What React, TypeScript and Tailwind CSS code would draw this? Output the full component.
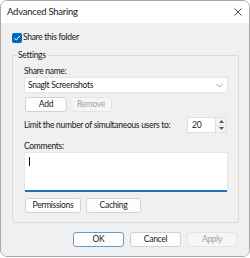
import React from "react";

function Btn({ children, w, disabled, primary }: { children: React.ReactNode; w: string; disabled?: boolean; primary?: boolean }) {
  return (
    <div
      className={
        "flex h-[15px] items-center justify-center rounded-[3px] border " +
        w +
        " " +
        (disabled
          ? "border-[#e4e4e4] bg-[#f5f5f5] text-[#a3a3a3]"
          : primary
          ? "border-[#6a9ad0] bg-[#fdfdfd] text-[#1a1a1a]"
          : "border-[#d2d2d2] bg-[#fdfdfd] text-[#1a1a1a]")
      }
    >
      {children}
    </div>
  );
}

export default function App() {
  return (
    <div className="h-[258px] w-[250px] bg-white" style={{ fontFamily: 'Lato, "Noto Sans", sans-serif' }}>
      <div className="flex h-[257px] w-[250px] flex-col overflow-hidden rounded-[7px] border border-[#a8a8a8]">
        <div className="flex h-[22px] shrink-0 items-center justify-between bg-white pl-[6px] pr-[7px] text-[9.5px] tracking-[-0.25px] text-[#1a1a1a]">
          <span>Advanced Sharing</span>
          <svg width="8" height="8" viewBox="0 0 8 8">
            <path d="M0.5 0.5 L7.5 7.5 M7.5 0.5 L0.5 7.5" stroke="#333" strokeWidth="0.9" />
          </svg>
        </div>
        <div className="flex flex-1 flex-col whitespace-nowrap bg-[#f0f0f0] px-[11px] text-[8.5px] leading-[11px] tracking-[-0.3px] text-[#161616]">
          <div className="mt-[9px] flex h-[11px] items-center gap-[1px]">
            <div className="flex h-[10px] w-[10px] items-center justify-center rounded-[2px] bg-[#0067c0]">
              <svg width="8" height="8" viewBox="0 0 8 8">
                <path d="M1.3 4.2 L3.2 6 L6.8 2" stroke="white" strokeWidth="1" fill="none" />
              </svg>
            </div>
            <span>Share this folder</span>
          </div>
          <div className="relative mt-[12px] flex h-[168px] w-[227px] flex-col rounded-[2px] border border-[#dadada] px-[11px]">
            <span className="absolute left-[4px] top-[-6px] bg-[#f0f0f0] px-[1px]">Settings</span>
            <span className="mt-[10px]">Share name:</span>
            <div className="flex h-[16px] w-[204px] items-center justify-between rounded-[2px] border border-[#e6e6e6] bg-white pl-[3px] pr-[4px]">
              <span>SnagIt Screenshots</span>
              <svg width="7" height="5" viewBox="0 0 7 5">
                <path d="M0.5 1 L3.5 4 L6.5 1" stroke="#888" strokeWidth="0.8" fill="none" />
              </svg>
            </div>
            <div className="mt-[4px] flex gap-[3px] pl-[1px]">
              <Btn w="w-[42px]">Add</Btn>
              <Btn w="w-[42px]" disabled>
                Remove
              </Btn>
            </div>
            <div className="mt-[5px] flex h-[16px] items-center justify-between">
              <span>Limit the number of simultaneous users to:</span>
              <div className="flex h-[16px] w-[40px] items-stretch border border-[#e0e0e0] bg-white">
                <span className="flex flex-1 items-center pl-[4px]">20</span>
                <div className="flex w-[11px] flex-col border-l border-[#e0e0e0] bg-[#f4f4f4]">
                  <div className="flex flex-1 items-center justify-center border-b border-[#e0e0e0]">
                    <svg width="5" height="3" viewBox="0 0 5 3"><path d="M0 3 L2.5 0 L5 3Z" fill="#555" /></svg>
                  </div>
                  <div className="flex flex-1 items-center justify-center">
                    <svg width="5" height="3" viewBox="0 0 5 3"><path d="M0 0 L2.5 3 L5 0Z" fill="#555" /></svg>
                  </div>
                </div>
              </div>
            </div>
            <span className="mt-[8px]">Comments:</span>
            <div className="flex h-[40px] w-[204px] flex-col rounded-t-[2px] border border-b-0 border-[#e6e6e6] bg-white">
              <div className="ml-[4px] mt-[4px] h-[9px] w-[1px] bg-[#111]" />
              <div className="mt-auto h-[2px] w-full bg-[#1f6fbf]" />
            </div>
            <div className="mt-[6px] flex gap-[5px] pl-[1px]">
              <Btn w="w-[56px]">Permissions</Btn>
              <Btn w="w-[55px]">Caching</Btn>
            </div>
          </div>
          <div className="mt-[9px] flex justify-end gap-[6px] pr-[1px]">
            <Btn w="w-[51px]" primary>
              OK
            </Btn>
            <Btn w="w-[51px]">Cancel</Btn>
            <Btn w="w-[50px]" disabled>
              Apply
            </Btn>
          </div>
        </div>
      </div>
    </div>
  );
}
